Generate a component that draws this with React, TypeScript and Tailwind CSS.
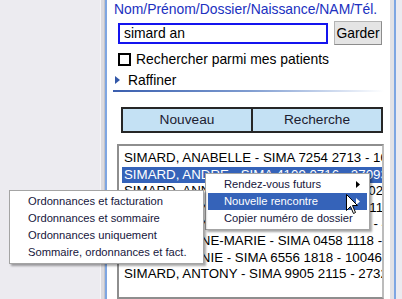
const rows = [
  'SIMARD, ANABELLE - SIMA 7254 2713 - 102548',
  'SIMARD, ANDRE - SIMA 4109 0716 - 270938',
  'SIMARD, ANNICK - SIMA 6303 2114 - 310287',
  'SIMARD, ANNE-SOPHIE - SIMA 5806 1911 - 1',
  'SIMARD, ANNABELLE - SIMA 8211 0516 - 4807',
  'SIMARD, ANNE-MARIE - SIMA 0458 1118 - 1905',
  'SIMARD, ANNIE - SIMA 6556 1818 - 1004666',
  'SIMARD, ANTONY - SIMA 9905 2115 - 273204',
];

const subItems = [
  'Ordonnances et facturation',
  'Ordonnances et sommaire',
  'Ordonnances uniquement',
  'Sommaire, ordonnances et fact.',
];

const Arrow = ({ color }: { color: string }) => (
  <svg width="4" height="7" viewBox="0 0 4 7">
    <path d="M0 0 L4 3.5 L0 7 Z" fill={color} />
  </svg>
);

export default function App() {
  return (
    <div className="relative flex w-[402px] h-[299px] overflow-hidden bg-[#ecebf0] font-['Liberation_Sans',Arial,sans-serif]">
      <div className="w-[100px] shrink-0 bg-[#ecebf0]" />
      <div className="w-[1px] shrink-0 bg-[#f6f6f8]" />
      <div className="w-[4px] shrink-0 bg-[#dcdbe0] border-r border-[#c4c4c8]" />
      <div className="w-[2px] shrink-0 bg-[#7ea6e2]" />

      <div className="w-[283px] shrink-0 bg-white flex flex-col">
        <div className="pl-[7px] pt-[1px] h-[17px] leading-[16px] text-[13.9px] text-[#2030c0] whitespace-nowrap">
          Nom/Prénom/Dossier/Naissance/NAM/Tél.
        </div>

        <div className="mt-[4px] pl-[11px] flex items-center gap-[6px]">
          <div className="w-[210px] h-[21px] border-2 border-[#1414ee] flex items-center pl-[4px] text-[13.9px] text-black">
            simard an
          </div>
          <div className="w-[48px] h-[24px] bg-[#e4e4e4] border border-[#b4b4b4] border-b-[#8c8c8c] border-r-[#8c8c8c] flex items-center justify-center text-[13.9px] text-black">
            Garder
          </div>
        </div>

        <div className="mt-[8px] pl-[11px] flex items-center h-[13px]">
          <div className="w-[13px] h-[13px] border-2 border-black" />
          <span className="ml-[5px] text-[13.9px] leading-[13px] text-black whitespace-nowrap">
            Rechercher parmi mes patients
          </span>
        </div>

        <div className="mt-[6px] pl-[8px] h-[16px] flex items-center gap-[8px]">
          <svg width="5" height="8" viewBox="0 0 5 8">
            <path d="M0 0 L5 4 L0 8 Z" fill="#3358a8" />
          </svg>
          <span className="text-[13.9px] text-black">Raffiner</span>
        </div>

        <div className="mt-[2px] ml-[6px] w-[271px] h-[2px] bg-gradient-to-r from-[#3a5eae] via-[#7f9cd0] to-white" />

        <div className="mt-[15px] ml-[14px] w-[262px] h-[26px] flex">
          <div className="flex-1 bg-[#c4e1f4] border-2 border-[#262626] flex items-center justify-center text-[13.7px] text-[#1c2030]">
            Nouveau
          </div>
          <div className="flex-1 bg-[#c4e1f4] border-2 border-l-0 border-[#262626] flex items-center justify-center text-[13.7px] text-[#1c2030]">
            Recherche
          </div>
        </div>

        <div className="mt-[11px] ml-[10px] w-[267px] flex-1 border-2 border-[#8e8e8e] border-r-[#bcbcbc] pt-[4px] pl-[3px] overflow-hidden">
          {rows.map((r, i) => (
            <div
              key={i}
              className={`h-[16.6px] leading-[16.6px] px-[2px] text-[13.3px] whitespace-nowrap overflow-hidden ${
                i === 1 ? 'bg-[#3563b9] text-white' : 'text-black'
              }`}
            >
              {r}
            </div>
          ))}
        </div>
      </div>

      <div className="w-[4px] shrink-0 bg-[#e2e2e6]" />
      <div className="w-[2px] shrink-0 bg-[#7ea6e2]" />
      <div className="flex-1 bg-[#ecebf0]" />

      {/* context menu */}
      <div className="absolute left-[205px] top-[173px] w-[165px] bg-white border border-[#a4a4a4] p-[2px] shadow-[2px_2px_2px_rgba(0,0,0,0.35)] text-[11.2px] text-[#16163c]">
        <div className="h-[17px] flex items-center pl-[16px] pr-[7px] justify-between">
          <span>Rendez-vous futurs</span>
          <Arrow color="#000" />
        </div>
        <div className="h-[17px] flex items-center pl-[16px] pr-[7px] justify-between bg-[#3563b9] text-white">
          <span>Nouvelle rencontre</span>
          <Arrow color="#fff" />
        </div>
        <div className="h-[17px] flex items-center pl-[16px]">
          <span>Copier numéro de dossier</span>
        </div>
      </div>

      {/* submenu */}
      <div className="absolute left-[9px] top-[190px] w-[195px] bg-white border border-[#a4a4a4] py-[2px] shadow-[2px_2px_2px_rgba(0,0,0,0.35)] text-[11.2px] text-[#16163c]">
        {subItems.map((s) => (
          <div key={s} className="h-[17px] flex items-center pl-[18px] whitespace-nowrap">
            {s}
          </div>
        ))}
      </div>

      {/* mouse pointer */}
      <svg className="absolute left-[346px] top-[194px]" width="13" height="21" viewBox="0 0 13 21">
        <path
          d="M0.5 0.5 L0.5 16.5 L4.5 12.5 L7.5 19.5 L9.5 18.5 L6.5 11.5 L11.5 11.5 Z"
          fill="white"
          stroke="black"
          strokeWidth="1"
          strokeLinejoin="miter"
        />
      </svg>
    </div>
  );
}
